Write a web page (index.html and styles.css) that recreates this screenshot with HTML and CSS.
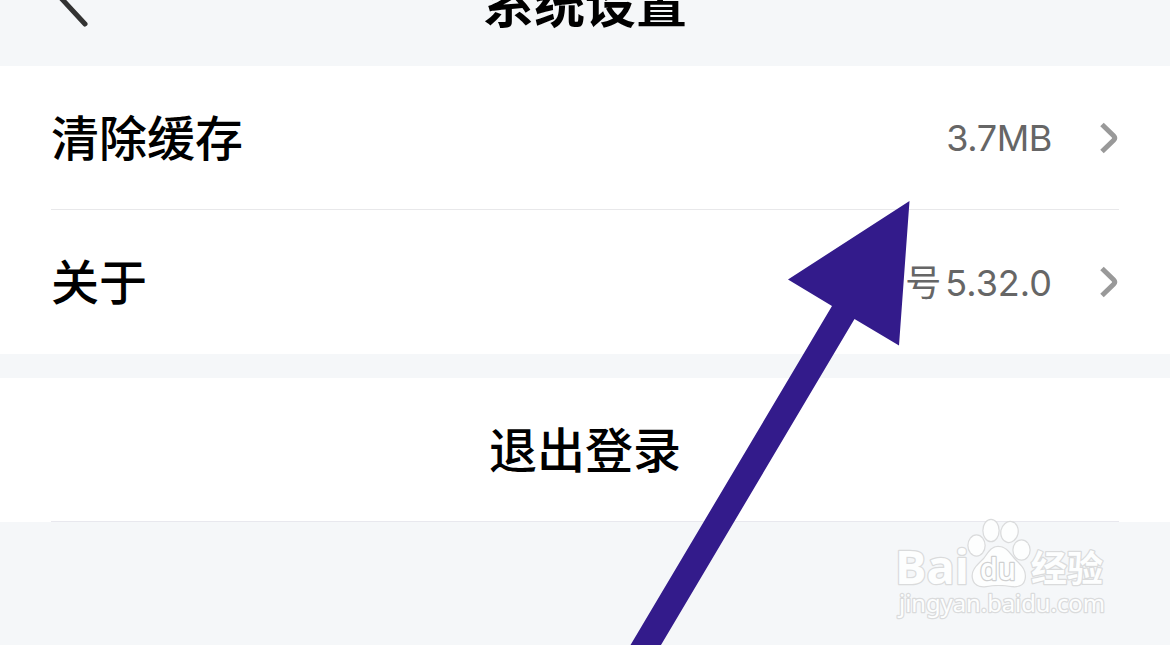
FILE: index.html
```html
<!DOCTYPE html>
<html lang="zh-CN">
<head>
  <meta charset="utf-8">
  <title>系统设置</title>
  <link rel="stylesheet" href="styles.css">
</head>
<body>
  <header class="nav-bar">
    <svg class="back-icon" width="40" height="72" viewBox="0 0 40 72">
      <path d="M31 13 L6.500 39.500 L31 66"/>
    </svg>
    <h1>系统设置</h1>
  </header>

  <main>
    <section class="group">
      <div class="row">
        <span class="label">清除缓存</span>
        <span class="value size">3.7MB</span>
        <svg class="chevron" width="20" height="34" viewBox="0 0 20 34">
          <path d="M3 3.5 L14.6 14.7 Q16.8 17 14.6 19.3 L3 30.5"/>
        </svg>
      </div>
      <div class="row">
        <span class="label">关于</span>
        <span class="value"><span class="cjk">号</span>5.32.0</span>
        <svg class="chevron" width="20" height="34" viewBox="0 0 20 34">
          <path d="M3 3.5 L14.6 14.7 Q16.8 17 14.6 19.3 L3 30.5"/>
        </svg>
      </div>
    </section>

    <section class="group">
      <div class="row logout">
        <span class="label">退出登录</span>
      </div>
    </section>
  </main>

  <!-- Pointer arrow -->
  <svg class="arrow" width="1170" height="645" viewBox="0 0 1170 645">
    <polygon points="909.5,201 788,279.5 832,306 630.5,645 661,645 854.5,319 899,345.5"/>
  </svg>

  <!-- Watermark -->
  <svg class="watermark" width="230" height="112" viewBox="0 0 230 112">
    <text class="brand" x="5" y="69" textLength="74" lengthAdjust="spacingAndGlyphs">Bai</text>
    <g class="paw">
      <ellipse cx="86.500" cy="30.500" rx="8" ry="10"/>
      <ellipse cx="101" cy="15.500" rx="7.500" ry="10.500"/>
      <ellipse cx="119.500" cy="17" rx="8" ry="10" transform="rotate(12 119.500 17)"/>
      <ellipse cx="131.500" cy="35" rx="8" ry="9.500"/>
      <path d="M108 32 C117 32 120 40 126 46 C132 52 136 56 134.500 64 C133 71 127 71.500 122 71 C114 69.500 103 69.500 96 71 C89 72 84 69 83 63 C81.500 55 88 50 94 44 C98 39 101 32 108 32 Z"/>
    </g>
    <text class="du" x="90" y="65" textLength="36" lengthAdjust="spacingAndGlyphs">du</text>
    <text class="product" x="141" y="67" textLength="72" lengthAdjust="spacingAndGlyphs">经验</text>
    <text class="site" x="9" y="97" textLength="206" lengthAdjust="spacingAndGlyphs">jingyan.baidu.com</text>
  </svg>
</body>
</html>
```

FILE: styles.css
```css
body {
  position: relative;
  width: 1170px;
  height: 645px;
  margin: 0;
  overflow: hidden;
  color: #000;
  background: #f5f7f9;
  font-family: Inter, "Noto Sans CJK SC", sans-serif;
}

.nav-bar {
  display: grid;
  grid-template-columns: 120px 1fr 120px;
  grid-template-rows: 66px;
  align-items: end;
  height: 66px;
}

.back-icon {
  margin: 0 0 36px 54px;
  fill: none;
  stroke: #333;
  stroke-width: 5;
  stroke-linecap: round;
  stroke-linejoin: round;
}

h1 {
  margin: 0 0 39px;
  font-family: "Noto Sans CJK SC", sans-serif;
  font-size: 51px;
  font-weight: 700;
  line-height: 51px;
  text-align: center;
}

.group {
  margin-bottom: 24px;
  padding: 0 51px;
  background: #fff;
}

.row {
  display: flex;
  align-items: center;
  box-sizing: border-box;
  height: 144px;
  border-bottom: 1px solid #e8e8ea;
}

.row:last-child {
  border-bottom-color: transparent;
}

.row.logout {
  justify-content: center;
  border-bottom-color: #e8e8ee;
}

.label {
  padding-bottom: 6px;
  font-family: "Noto Sans CJK SC", sans-serif;
  font-size: 48px;
  font-weight: 500;
  line-height: 72px;
}

.value {
  margin-left: auto;
  color: #666;
  font-size: 36px;
  line-height: 54px;
}

.value.size {
  letter-spacing: -0.4px;
}

.cjk {
  margin-right: 4px;
  font-family: "Noto Sans CJK SC", sans-serif;
}

.chevron {
  margin-left: 47px;
  fill: none;
  stroke: #999;
  stroke-width: 5;
}

.arrow {
  position: absolute;
  top: 0;
  left: 0;
  fill: #331b8b;
}

.watermark {
  position: absolute;
  top: 515px;
  left: 890px;
  fill: #fdfefe;
  stroke: #dadbdc;
  stroke-width: 2.5;
  stroke-linejoin: round;
  paint-order: stroke;
}

.brand {
  font-family: "Open Sans", sans-serif;
  font-size: 46px;
  font-weight: 700;
}

.du {
  font-family: "Open Sans", sans-serif;
  font-size: 30px;
  font-weight: 600;
  stroke: #cfd0d1;
}

.product {
  font-family: "Noto Sans CJK SC", sans-serif;
  font-size: 36px;
  font-weight: 700;
}

.site {
  font-family: "Noto Sans", sans-serif;
  font-size: 24px;
}
```
